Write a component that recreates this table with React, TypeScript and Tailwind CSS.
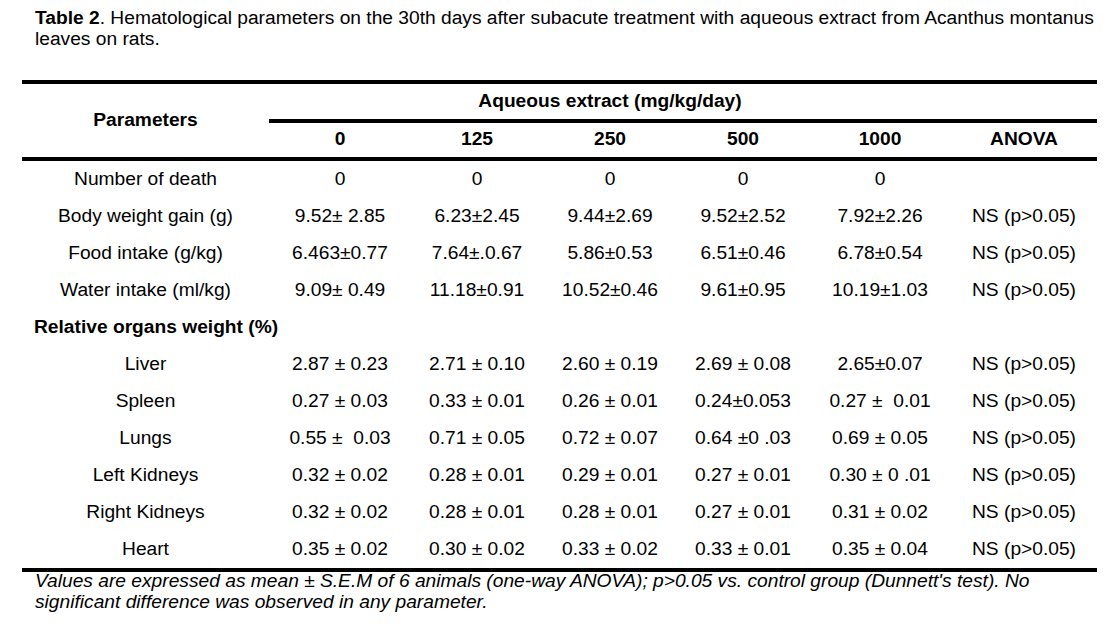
const cols = "grid grid-cols-[247px_142px_132px_134px_132px_142px_146px]";

const doses = ["0", "125", "250", "500", "1000", "ANOVA"];

type Row = { label: string; values: string[] } | { section: string };

const rows: Row[] = [
  { label: "Number of death", values: ["0", "0", "0", "0", "0", ""] },
  { label: "Body weight gain (g)", values: ["9.52± 2.85", "6.23±2.45", "9.44±2.69", "9.52±2.52", "7.92±2.26", "NS (p>0.05)"] },
  { label: "Food intake (g/kg)", values: ["6.463±0.77", "7.64±.0.67", "5.86±0.53", "6.51±0.46", "6.78±0.54", "NS (p>0.05)"] },
  { label: "Water intake (ml/kg)", values: ["9.09± 0.49", "11.18±0.91", "10.52±0.46", "9.61±0.95", "10.19±1.03", "NS (p>0.05)"] },
  { section: "Relative organs weight (%)" },
  { label: "Liver", values: ["2.87 ± 0.23", "2.71 ± 0.10", "2.60 ± 0.19", "2.69 ± 0.08", "2.65±0.07", "NS (p>0.05)"] },
  { label: "Spleen", values: ["0.27 ± 0.03", "0.33 ± 0.01", "0.26 ± 0.01", "0.24±0.053", "0.27 ±  0.01", "NS (p>0.05)"] },
  { label: "Lungs", values: ["0.55 ±  0.03", "0.71 ± 0.05", "0.72 ± 0.07", "0.64 ±0 .03", "0.69 ± 0.05", "NS (p>0.05)"] },
  { label: "Left Kidneys", values: ["0.32 ± 0.02", "0.28 ± 0.01", "0.29 ± 0.01", "0.27 ± 0.01", "0.30 ± 0 .01", "NS (p>0.05)"] },
  { label: "Right Kidneys", values: ["0.32 ± 0.02", "0.28 ± 0.01", "0.28 ± 0.01", "0.27 ± 0.01", "0.31 ± 0.02", "NS (p>0.05)"] },
  { label: "Heart", values: ["0.35 ± 0.02", "0.30 ± 0.02", "0.33 ± 0.02", "0.33 ± 0.01", "0.35 ± 0.04", "NS (p>0.05)"] },
];

export default function App() {
  return (
    <div className="min-h-[635px] w-[1119px] bg-white text-black font-['Liberation_Sans',Arial,sans-serif] text-[19.2px]">
      {/* caption */}
      <p className="pl-[35px] pt-[7px] leading-[21.3px] whitespace-nowrap">
        <span className="font-bold">Table 2</span>. Hematological parameters on the 30th days after subacute
        treatment with aqueous extract from Acanthus montanus
        <br />
        leaves on rats.
      </p>

      <div className="ml-[22px] mt-[30px] w-[1075px]">
        {/* header */}
        <div className={`${cols} border-y-[4px] border-black`}>
          <div className="row-span-2 flex items-center justify-center font-bold">Parameters</div>
          <div className="col-span-6 flex h-[39px] items-center justify-center border-b-[4px] border-black pr-[146px] font-bold">
            Aqueous extract (mg/kg/day)
          </div>
          {doses.map((d) => (
            <div key={d} className="flex h-[34px] items-center justify-center font-bold">
              {d}
            </div>
          ))}
        </div>

        {/* body */}
        <div className="border-b-[4px] border-black">
          {rows.map((r, i) =>
            "section" in r ? (
              <div key={i} className="flex h-[37px] items-center pl-[12px] font-bold">
                {r.section}
              </div>
            ) : (
              <div key={i} className={`${cols} h-[37px]`}>
                <div className="flex items-center justify-center">{r.label}</div>
                {r.values.map((v, j) => (
                  <div key={j} className="flex items-center justify-center whitespace-pre">
                    {v}
                  </div>
                ))}
              </div>
            )
          )}
        </div>
      </div>

      {/* footnote */}
      <p className="-mt-[2px] pl-[35px] italic leading-[21.7px] whitespace-nowrap">
        Values are expressed as mean ± S.E.M of 6 animals (one-way ANOVA); p&gt;0.05 vs. control group
        (Dunnett's test). No
        <br />
        significant difference was observed in any parameter.
      </p>
    </div>
  );
}
